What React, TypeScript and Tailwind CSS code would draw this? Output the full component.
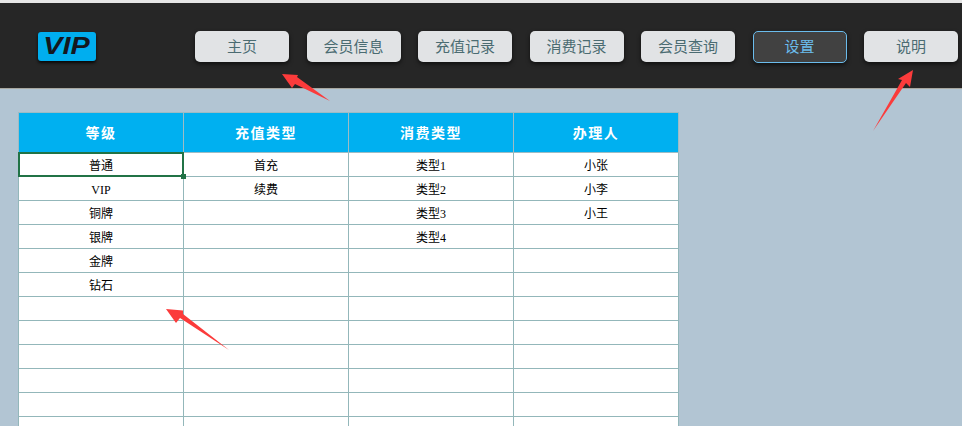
const navItems = ['主页', '会员信息', '充值记录', '消费记录', '会员查询', '设置', '说明']

const rows = [
  ['普通', '首充', '类型1', '小张'],
  ['VIP', '续费', '类型2', '小李'],
  ['铜牌', '', '类型3', '小王'],
  ['银牌', '', '类型4', ''],
  ['金牌', '', '', ''],
  ['钻石', '', '', ''],
  ['', '', '', ''],
  ['', '', '', ''],
  ['', '', '', ''],
  ['', '', '', ''],
  ['', '', '', ''],
  ['', '', '', ''],
]

const headers = ['等级', '充值类型', '消费类型', '办理人']

function Arrow({ points }: { points: string }) {
  return <polygon points={points} fill="#fb3b3b" />
}

export default function App() {
  return (
    <div className="relative w-[962px] h-[426px] overflow-hidden bg-[#b2c5d3] font-['Noto_Sans_CJK_SC',sans-serif]">
      {/* Top bar */}
      <div className="h-[3px] bg-[#e6e6e6]" />
      <header className="flex items-center h-[86px] pl-[38px] pr-[4px] pt-[2px] bg-[#262626] border-b border-b-[#a8a8a0]">
        <div className="flex items-center justify-center w-[58px] h-[29px] mb-[1px] rounded-[3px] bg-[#00aeef] shadow-[0_2px_3px_rgba(0,0,0,0.8)]">
          <span className="scale-x-[1.25] text-[23px] leading-none font-bold italic text-[#14181f] font-['Liberation_Sans',sans-serif]">
            VIP
          </span>
        </div>
        <nav className="flex items-center gap-[17.5px] ml-auto">
          {navItems.map((label) =>
            label === '设置' ? (
              <button
                key={label}
                className="w-[94px] h-[32px] rounded-[5px] border border-[#6bbcec] bg-[#414141] text-[15px] text-[#6bbcec] shadow-[0_2px_4px_rgba(0,0,0,0.6)]"
              >
                {label}
              </button>
            ) : (
              <button
                key={label}
                className="w-[94px] h-[31px] rounded-[5px] bg-[#e1e3e5] text-[15px] text-[#4b6c72] shadow-[0_2px_4px_rgba(0,0,0,0.6)]"
              >
                {label}
              </button>
            )
          )}
        </nav>
      </header>

      {/* Settings table */}
      <div className="pt-[23px] pl-[18px]">
        <table className="table-fixed w-[661px] border-collapse">
          <thead>
            <tr className="h-[40px]">
              {headers.map((h) => (
                <th
                  key={h}
                  className="w-[165px] p-0 border border-[#9dbcc4] bg-[#00b0f0] text-[14px] font-bold tracking-[1.5px] text-white"
                >
                  {h}
                </th>
              ))}
            </tr>
          </thead>
          <tbody>
            {rows.map((row, i) => (
              <tr key={i} className="h-[24px]">
                {row.map((cell, j) => (
                  <td
                    key={j}
                    className={
                      i === 0 && j === 0
                        ? "relative z-10 p-0 pt-[2px] border border-[#93b7ba] bg-white text-center text-[12px] leading-none text-black font-['Liberation_Serif','Noto_Sans_CJK_SC',serif]"
                        : "p-0 pt-[2px] border border-[#93b7ba] bg-white text-center text-[12px] leading-none text-black font-['Liberation_Serif','Noto_Sans_CJK_SC',serif]"
                    }
                  >
                    {cell}
                    {i === 0 && j === 0 && (
                      <>
                        <div className="absolute -inset-[1px] border-2 border-[#217346]" />
                        <div className="absolute -right-[3px] -bottom-[3px] w-[5px] h-[5px] bg-[#217346]" />
                      </>
                    )}
                  </td>
                ))}
              </tr>
            ))}
          </tbody>
        </table>
      </div>

      {/* Red annotation arrows */}
      <svg className="absolute inset-0 pointer-events-none" width="962" height="426" viewBox="0 0 962 426">
        <Arrow points="282,74 298,75 297,77 330,101 295,84 292,88" />
        <Arrow points="913,70 898,79 902,80 873,131 906,83 910,87" />
        <Arrow points="166,309 183,310.5 183,314 229,350 180,318 176,323" />
      </svg>
    </div>
  )
}
